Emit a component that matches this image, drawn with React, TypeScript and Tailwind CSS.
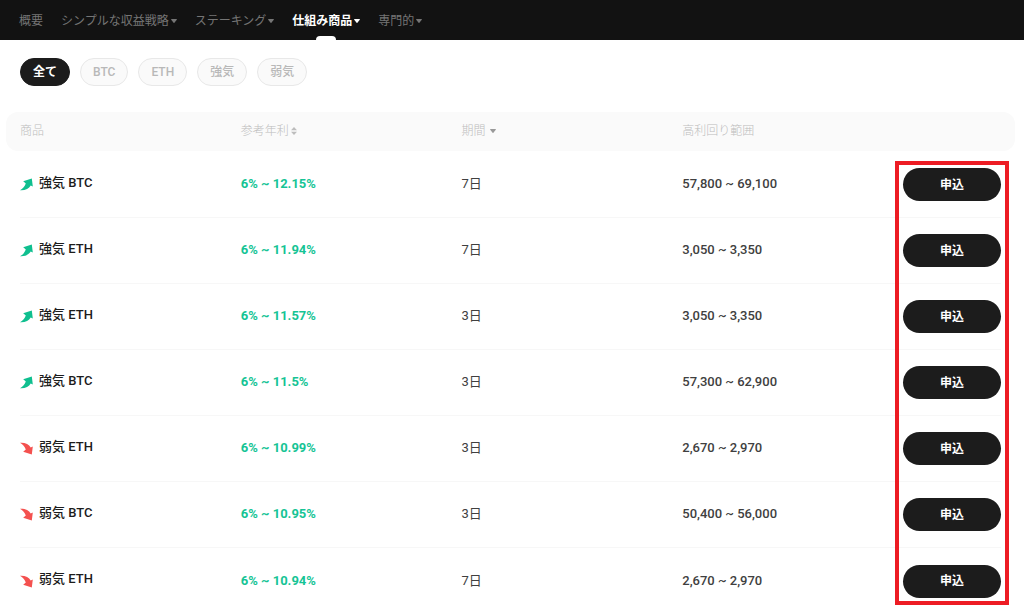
import clsx from 'clsx';

type Trend = 'up' | 'down';

interface Product {
  trend: Trend;
  coin: string;
  apr: string;
  term: string;
  range: string;
}

const navItems = [
  { label: '概要', menu: false, active: false },
  { label: 'シンプルな収益戦略', menu: true, active: false },
  { label: 'ステーキング', menu: true, active: false },
  { label: '仕組み商品', menu: true, active: true },
  { label: '専門的', menu: true, active: false },
];

const filters = ['全て', 'BTC', 'ETH', '強気', '弱気'];

const products: Product[] = [
  { trend: 'up', coin: 'BTC', apr: '6% ~ 12.15%', term: '7日', range: '57,800 ~ 69,100' },
  { trend: 'up', coin: 'ETH', apr: '6% ~ 11.94%', term: '7日', range: '3,050 ~ 3,350' },
  { trend: 'up', coin: 'ETH', apr: '6% ~ 11.57%', term: '3日', range: '3,050 ~ 3,350' },
  { trend: 'up', coin: 'BTC', apr: '6% ~ 11.5%', term: '3日', range: '57,300 ~ 62,900' },
  { trend: 'down', coin: 'ETH', apr: '6% ~ 10.99%', term: '3日', range: '2,670 ~ 2,970' },
  { trend: 'down', coin: 'BTC', apr: '6% ~ 10.95%', term: '3日', range: '50,400 ~ 56,000' },
  { trend: 'down', coin: 'ETH', apr: '6% ~ 10.94%', term: '7日', range: '2,670 ~ 2,970' },
];

const Caret = () => (
  <svg viewBox="0 0 6 4" className="h-1 w-1.5" fill="currentColor" aria-hidden="true">
    <path d="M0.6 0h4.8c.5 0 .7.5.4.8L3.4 3.7a.5.5 0 0 1-.8 0L.2.8C-.1.5.1 0 .6 0z" />
  </svg>
);

const SortIcon = () => (
  <svg viewBox="0 0 6 8" className="h-2 w-1.5" fill="currentColor" aria-hidden="true">
    <path d="M3 0l3 3.3H0zM3 8l3-3.3H0z" />
  </svg>
);

const TrendArrow: React.FC<{ trend: Trend }> = ({ trend }) => (
  <svg
    viewBox="0 0 14 13"
    className={clsx(
      'mt-1 h-[13px] w-3.5 shrink-0',
      trend === 'up' ? 'text-[#0fbf8f]' : '-scale-y-100 text-[#f4514f]'
    )}
    fill="currentColor"
    aria-hidden="true"
  >
    <path d="M11.8 0.6L12.8 8.6L10.7 7.5C9 10.6 5 12.6 0 12.2C2.6 10.8 4.6 8.6 5.8 5.4L3.2 3.2z" />
  </svg>
);

const NavBar = () => (
  <nav className="flex h-10 bg-[#121212] px-[19px] text-[12px] leading-4">
    <ul className="flex gap-[18px]">
      {navItems.map(item => (
        <li key={item.label} className="flex">
          <a
            href="#"
            className={clsx(
              'relative flex items-center gap-0.5 whitespace-nowrap pt-0.5',
              item.active ? 'font-bold text-white' : 'text-[#757575]'
            )}
          >
            {item.label}
            {item.menu && <Caret />}
            {item.active && (
              <span className="absolute bottom-0 left-1/2 h-1 w-5 -translate-x-1/2 rounded-t-sm bg-white" />
            )}
          </a>
        </li>
      ))}
    </ul>
  </nav>
);

const FilterBar = () => (
  <div className="flex gap-2.5 px-5 pt-[18px]">
    {filters.map((filter, i) => (
      <button
        key={filter}
        type="button"
        className={clsx(
          'h-7 rounded-full border px-3 text-[12px] leading-4',
          i === 0
            ? 'border-[#1c1c1c] bg-[#1c1c1c] font-bold text-white'
            : 'border-[#e8e8e8] bg-[#fafafa] font-medium text-[#b8b8b8]'
        )}
      >
        {filter}
      </button>
    ))}
  </div>
);

const ProductTable = () => (
  <div className="relative mt-[26px] pl-5 pr-[23px]">
    <table className="w-full table-fixed border-separate border-spacing-0 text-left text-[13px] leading-5 text-[#404040]">
      <colgroup>
        <col />
        <col />
        <col />
        <col />
        <col className="w-[98px]" />
      </colgroup>
      <thead className="relative text-[12px] leading-4 text-[#bdbdbd] before:absolute before:bottom-px before:top-0 before:-left-3.5 before:-right-3.5 before:-z-10 before:rounded-xl before:bg-[#fafafa]">
        <tr className="h-10 *:pb-[3px]">
          <th className="font-light">商品</th>
          <th className="font-light">
            <span className="flex items-center gap-0.5">
              参考年利 <SortIcon />
            </span>
          </th>
          <th className="font-light">
            <span className="flex items-center gap-1">
              期間 <span className="text-[#999999]"><Caret /></span>
            </span>
          </th>
          <th className="font-light">高利回り範囲</th>
          <th aria-label="申込" />
        </tr>
      </thead>
      <tbody>
        {products.map((p, i) => (
          <tr key={i} className="h-[66px] *:border-b *:border-[#f7f7f7] last:*:border-0">
            <td className="pb-1 font-medium text-[#1c1c1c]">
              <span className="flex items-center gap-[5px]">
                <TrendArrow trend={p.trend} />
                {p.trend === 'up' ? '強気' : '弱気'} {p.coin}
              </span>
            </td>
            <td className="pb-px font-bold text-[#16c495]">{p.apr}</td>
            <td className="pb-px">{p.term}</td>
            <td className="pb-px font-medium">{p.range}</td>
            <td>
              <button
                type="button"
                className="block h-[33px] w-full rounded-full bg-[#1c1c1c] text-[12px] font-bold leading-4 text-white"
              >
                申込
              </button>
            </td>
          </tr>
        ))}
      </tbody>
    </table>
    {/* highlight around the subscribe column */}
    <div className="pointer-events-none absolute bottom-[9px] right-[15px] top-[49px] w-[114px] border-4 border-[#ed1c24]" />
  </div>
);

const App = () => (
  <main className="isolate min-h-screen bg-white font-['Roboto','Noto_Sans_CJK_JP',sans-serif]">
    <NavBar />
    <FilterBar />
    <ProductTable />
  </main>
);

export default App;
